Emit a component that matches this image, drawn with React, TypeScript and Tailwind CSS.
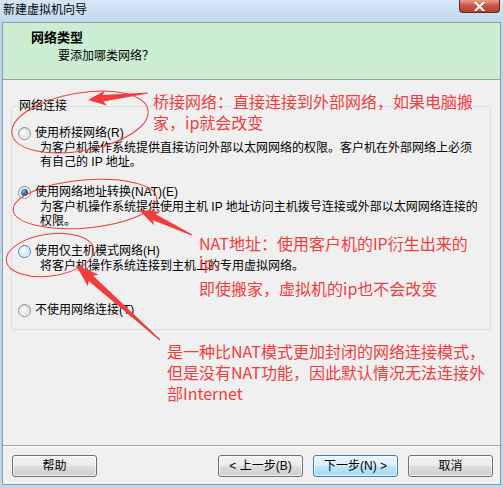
import React from "react";

function arrowPoints(
  tx: number,
  ty: number,
  px: number,
  py: number,
  headLen: number,
  headW: number,
  neckW: number
): string {
  const dx = px - tx;
  const dy = py - ty;
  const L = Math.hypot(dx, dy);
  const ux = dx / L;
  const uy = dy / L;
  const nx = -uy;
  const ny = ux;
  const bx = px - ux * headLen;
  const by = py - uy * headLen;
  const pts: [number, number][] = [
    [tx + nx * 0.6, ty + ny * 0.6],
    [bx + nx * neckW, by + ny * neckW],
    [bx - ux * 3 + nx * headW, by - uy * 3 + ny * headW],
    [px, py],
    [bx - ux * 3 - nx * headW, by - uy * 3 - ny * headW],
    [bx - nx * neckW, by - ny * neckW],
    [tx - nx * 0.6, ty - ny * 0.6],
  ];
  return pts.map((p) => `${p[0].toFixed(1)},${p[1].toFixed(1)}`).join(" ");
}

function Radio({ state }: { state: "off" | "on" | "hover" }) {
  if (state === "on") {
    return (
      <div className="w-[13px] h-[13px] rounded-full border border-[#8e8f8f] bg-[linear-gradient(180deg,#e6e6e6,#ffffff)] flex items-center justify-center shrink-0">
        <div className="w-[7px] h-[7px] rounded-full bg-[radial-gradient(circle_at_35%_35%,#6fc0f0,#1b5c98_55%,#0e3a66)]" />
      </div>
    );
  }
  if (state === "hover") {
    return (
      <div className="w-[13px] h-[13px] rounded-full border border-[#3c7fb1] bg-[linear-gradient(180deg,#d8ecfb,#ffffff)] flex items-center justify-center shrink-0">
        <div className="w-[9px] h-[9px] rounded-full bg-[radial-gradient(circle_at_40%_40%,#ffffff,#cfe8fa_60%,#a9d4f3)]" />
      </div>
    );
  }
  return (
    <div className="w-[13px] h-[13px] rounded-full border border-[#8e8f8f] bg-[linear-gradient(180deg,#d2d2d2,#ffffff)] flex items-center justify-center shrink-0">
      <div className="w-[9px] h-[9px] rounded-full bg-[radial-gradient(circle_at_40%_40%,#ffffff,#e6e6e6_60%,#cfcfcf)]" />
    </div>
  );
}

function Option({
  state,
  label,
  desc,
  className,
}: {
  state: "off" | "on" | "hover";
  label: string;
  desc: string[];
  className?: string;
}) {
  return (
    <div className={"flex flex-col " + (className ?? "")}>
      <div className="h-[16px] flex items-center gap-[4px]">
        <Radio state={state} />
        <span className="leading-[16px] whitespace-nowrap">{label}</span>
      </div>
      {desc.map((d) => (
        <div key={d} className="pl-[22px] leading-[14px] whitespace-nowrap">
          {d}
        </div>
      ))}
    </div>
  );
}

function Btn({ children, primary }: { children: React.ReactNode; primary?: boolean }) {
  return (
    <div
      className={
        "w-[85px] h-[22px] rounded-[3px] border flex items-center justify-center leading-none shadow-[inset_0_0_0_1px_rgba(255,255,255,0.7)] " +
        (primary
          ? "border-[#3c7fb1] bg-[linear-gradient(180deg,#eaf6fd_0%,#d9f0fc_50%,#bee6fd_51%,#a7d9f5_100%)]"
          : "border-[#707070] bg-[linear-gradient(180deg,#f2f2f2_0%,#ebebeb_50%,#dddddd_51%,#cfcfcf_100%)]")
      }
    >
      {children}
    </div>
  );
}

export default function App() {
  const red = "#f23c3c";
  return (
    <div className="w-[503px] h-[488px] relative overflow-hidden bg-[#bfd6ee] flex flex-col text-[12px] text-black font-['Liberation_Sans','Noto_Sans_CJK_SC',sans-serif]">
      {/* title bar */}
      <div className="h-[22px] shrink-0 flex items-start justify-between bg-[linear-gradient(180deg,#d6e6f6,#c3d8ee)]">
        <span className="pl-[3px] pt-[2px] leading-[16px]">新建虚拟机向导</span>
        <div className="w-[41px] h-[13px] mr-[3px] rounded-b-[4px] border border-t-0 border-[#5a2a2a] bg-[linear-gradient(180deg,#e8a08f,#c75646_45%,#b8402e)] flex items-center justify-center">
          <svg width="11" height="9" viewBox="0 0 11 9">
            <path d="M1.5 0.5 L9.5 8.5 M9.5 0.5 L1.5 8.5" stroke="#ffffff" strokeWidth="2.2" strokeLinecap="square" />
          </svg>
        </div>
      </div>

      {/* dialog client */}
      <div className="mx-[2px] mb-[3px] flex-1 border border-[#8c9aa8] bg-[#f0f0f0] flex flex-col">
        {/* header */}
        <div className="h-[57px] shrink-0 bg-[#cbeed2] border-b border-[#a0a0a0] pl-[28px] pt-[7px] flex flex-col">
          <div className="font-bold text-[13px] leading-[16px]">网络类型</div>
          <div className="pl-[27px] mt-[2px] leading-[16px]">要添加哪类网络？</div>
        </div>

        {/* body */}
        <div className="flex-1 flex flex-col pt-[26px] pl-[8px] pr-[9px]">
          <div className="relative h-[224px] rounded-[3px] border border-[#d5dfe5] pl-[6px] pt-[18px] flex flex-col">
            <span className="absolute left-[6px] top-[-8px] px-[1px] leading-[14px] bg-[#f0f0f0]">网络连接</span>
            <Option
              state="off"
              label="使用桥接网络(R)"
              desc={[
                "为客户机操作系统提供直接访问外部以太网网络的权限。客户机在外部网络上必须",
                "有自己的 IP 地址。",
              ]}
              className="h-[59px]"
            />
            <Option
              state="on"
              label="使用网络地址转换(NAT)(E)"
              desc={[
                "为客户机操作系统提供使用主机 IP 地址访问主机拨号连接或外部以太网网络连接的",
                "权限。",
              ]}
              className="h-[59px]"
            />
            <Option
              state="hover"
              label="使用仅主机模式网络(H)"
              desc={["将客户机操作系统连接到主机上的专用虚拟网络。"]}
              className="h-[59px]"
            />
            <Option state="off" label="不使用网络连接(T)" desc={[]} />
          </div>
        </div>

        {/* separator */}
        <div className="h-[2px] shrink-0 border-t border-[#a0a0a0] bg-white" />

        {/* buttons */}
        <div className="h-[37px] shrink-0 flex items-start pt-[8px] pl-[9px] pr-[7px]">
          <Btn>帮助</Btn>
          <div className="ml-auto flex gap-[10px]">
            <Btn>&lt; 上一步(B)</Btn>
            <Btn primary>下一步(N) &gt;</Btn>
            <Btn>取消</Btn>
          </div>
        </div>
      </div>

      {/* annotations overlay */}
      <svg className="absolute left-0 top-0 pointer-events-none" width="503" height="488" viewBox="0 0 503 488">
        <ellipse cx="80" cy="122" rx="69" ry="29" fill="none" stroke={red} strokeWidth="1" transform="rotate(-10 80 122)" />
        <ellipse cx="85" cy="204" rx="72" ry="24" fill="none" stroke={red} strokeWidth="1" transform="rotate(-5 85 204)" />
        <ellipse cx="50" cy="255" rx="44" ry="21" fill="none" stroke={red} strokeWidth="1" transform="rotate(-8 50 255)" />
        <polygon points={arrowPoints(148, 93, 88, 100, 15, 7.5, 3.3)} fill={red} />
        <polygon points={arrowPoints(192, 235, 139, 210, 17, 7.5, 3.3)} fill={red} />
        <polygon points={arrowPoints(160, 340, 76, 265, 20, 8, 3.5)} fill={red} />
      </svg>

      <div className="absolute left-[153px] top-[91px] text-[16px] leading-[21px] text-[#f23c3c] font-['Noto_Sans_CJK_SC',sans-serif] whitespace-nowrap">
        <div>桥接网络：直接连接到外部网络，如果电脑搬</div>
        <div>家，ip就会改变</div>
      </div>
      <div className="absolute left-[199px] top-[233px] text-[16px] text-[#f23c3c] font-['Noto_Sans_CJK_SC',sans-serif] whitespace-nowrap">
        <div className="leading-[20px]">NAT地址：使用客户机的IP衍生出来的</div>
        <div className="leading-[19px]">ip，</div>
        <div className="leading-[20px] mt-[6px]">即使搬家，虚拟机的ip也不会改变</div>
      </div>
      <div className="absolute left-[167px] top-[341px] text-[16px] leading-[21px] text-[#f23c3c] font-['Noto_Sans_CJK_SC',sans-serif] whitespace-nowrap">
        <div>是一种比NAT模式更加封闭的网络连接模式，</div>
        <div>但是没有NAT功能，因此默认情况无法连接外</div>
        <div>部Internet</div>
      </div>
    </div>
  );
}
